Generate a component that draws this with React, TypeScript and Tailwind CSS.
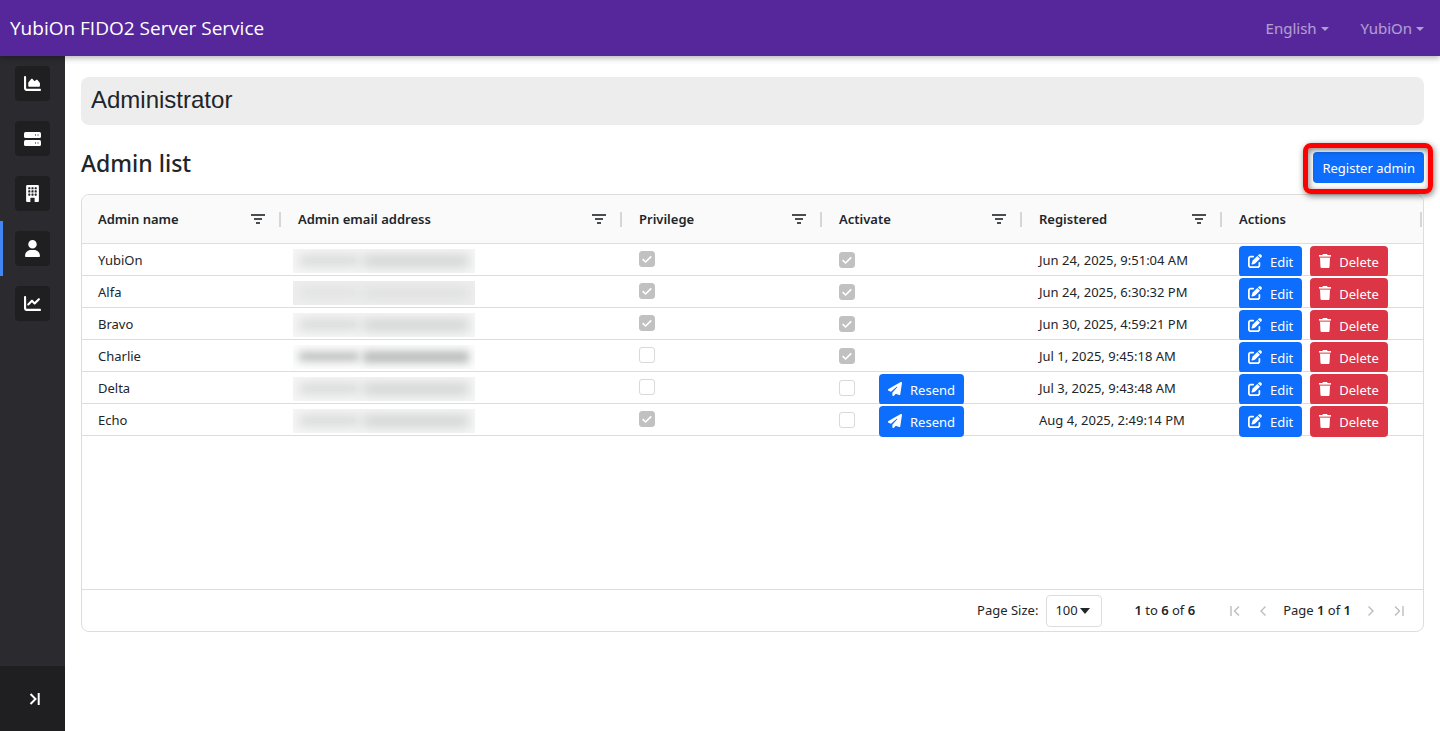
import type { ReactNode } from "react";
import { FaChartArea, FaChartLine, FaPaperPlane, FaPenToSquare, FaUser } from "react-icons/fa6";
import { BsBuildingFill } from "react-icons/bs";

type Admin = {
  name: string;
  privilege: boolean;
  active: boolean;
  registered: string;
  mask: "mid" | "light" | "dark";
};

const admins: Admin[] = [
  { name: "YubiOn", privilege: true, active: true, registered: "Jun 24, 2025, 9:51:04 AM", mask: "mid" },
  { name: "Alfa", privilege: true, active: true, registered: "Jun 24, 2025, 6:30:32 PM", mask: "light" },
  { name: "Bravo", privilege: true, active: true, registered: "Jun 30, 2025, 4:59:21 PM", mask: "mid" },
  { name: "Charlie", privilege: false, active: true, registered: "Jul 1, 2025, 9:45:18 AM", mask: "dark" },
  { name: "Delta", privilege: false, active: false, registered: "Jul 3, 2025, 9:43:48 AM", mask: "mid" },
  { name: "Echo", privilege: true, active: false, registered: "Aug 4, 2025, 2:49:14 PM", mask: "mid" },
];

function ServerIcon() {
  return (
    <svg viewBox="0 0 17 14" className="h-[14px] w-[17px]" aria-hidden="true">
      <g fill="currentColor">
        <rect width="17" height="6" rx="1.5" />
        <rect y="8" width="17" height="6" rx="1.5" />
      </g>
      <path d="M11 2h1v2h-1zM13.5 2h1v2h-1zM11 10h1v2h-1zM13.5 10h1v2h-1z" fill="#8b8b8d" />
    </svg>
  );
}

const navItems: { label: string; icon: ReactNode; current?: boolean }[] = [
  { label: "Dashboard", icon: <FaChartArea className="size-[17px]" /> },
  { label: "Servers", icon: <ServerIcon /> },
  { label: "Company", icon: <BsBuildingFill className="size-[17px]" /> },
  { label: "Administrator", icon: <FaUser className="size-[17px]" />, current: true },
  { label: "Statistics", icon: <FaChartLine className="size-[17px]" /> },
];

const columns = [
  { title: "Admin name", filter: true },
  { title: "Admin email address", filter: true },
  { title: "Privilege", filter: true },
  { title: "Activate", filter: true },
  { title: "Registered", filter: true },
  { title: "Actions", filter: false },
];

const masks = {
  mid: { box: "bg-[#f6f6f6]", bar: "bg-[#cfd1d1] blur-[6px]" },
  light: { box: "bg-[#eeeeee]", bar: "bg-[#dedfdf] blur-[6px]" },
  dark: { box: "bg-[#fcfcfc]", bar: "bg-[#b9bbbb] blur-[4px]" },
};

function MaskedEmail({ tone }: { tone: Admin["mask"] }) {
  const mask = masks[tone];
  return (
    <div className={`-ml-[5px] flex h-6 w-[182px] items-center gap-1 overflow-hidden px-[6px] ${mask.box}`}>
      <span className={`h-[9px] w-15 ${mask.bar}`} />
      <span className={`h-3 flex-1 ${mask.bar}`} />
    </div>
  );
}

function CheckCell({ checked, label }: { checked: boolean; label: string }) {
  return (
    <span className="grid size-4 shrink-0">
      <input
        type="checkbox"
        aria-label={label}
        defaultChecked={checked}
        disabled
        className="size-4 appearance-none rounded-[3px] border border-[#d9d9d9] bg-white [grid-area:1/1] checked:border-[#c1c1c1] checked:bg-[#c1c1c1]"
      />
      {checked && (
        <svg viewBox="0 0 16 16" className="size-4 [grid-area:1/1]" fill="none" stroke="white" strokeWidth="1.6" aria-hidden="true">
          <path d="M3.6 8.2 6.6 11 12.2 5.4" />
        </svg>
      )}
    </span>
  );
}

function TrashIcon() {
  return (
    <svg viewBox="0 0 12 14" className="h-[14px] w-3" fill="currentColor" aria-hidden="true">
      <path d="M4 0h4l.6 1H12v1.4H0V1h3.4z" />
      <path d="M.4 2.4h11.2v1H.4z" opacity=".45" />
      <path d="M1 3.8h10l-.5 9.3a1 1 0 0 1-1 .9h-7a1 1 0 0 1-1-.9z" />
    </svg>
  );
}

function RowButton({ icon, label, danger = false }: { icon: ReactNode; label: string; danger?: boolean }) {
  return (
    <button
      type="button"
      className={`flex h-[31px] shrink-0 items-center gap-2 rounded px-[9px] text-[13px] text-white ${danger ? "bg-[#dc3545]" : "bg-[#0d6efd]"}`}
    >
      <span className="pb-[2px]">{icon}</span>
      <span className="pt-[2px]">{label}</span>
    </button>
  );
}

function Chevron({ back = false, bar = false }: { back?: boolean; bar?: boolean }) {
  return (
    <svg viewBox="0 0 16 16" className={`size-4 ${back ? "rotate-180" : ""}`} fill="none" stroke="currentColor" strokeWidth="1.4" aria-hidden="true">
      {bar ? <path d="M4 3.5 8.5 8 4 12.5M12 3v10" /> : <path d="M5.5 3.5 10 8l-4.5 4.5" />}
    </svg>
  );
}

function NavMenu({ label }: { label: string }) {
  return (
    <button type="button" className="flex items-center gap-1 text-[15px] text-white/55">
      {label}
      <svg viewBox="0 0 8 4" className="h-1 w-2" fill="currentColor" aria-hidden="true">
        <path d="M0 0h8L4 4z" />
      </svg>
    </button>
  );
}

export default function App() {
  return (
    <div className="flex min-h-screen flex-col bg-white font-['Noto_Sans','Open_Sans',sans-serif] text-[#212529]">
      <header className="z-10 flex h-14 items-center justify-between bg-[#56279b] pt-px pr-4 pl-[10px] shadow-[0_2px_6px_rgba(0,0,0,0.3)]">
        <a href="#home" className="font-['Open_Sans','Noto_Sans',sans-serif] text-[19px] text-white">YubiOn FIDO2 Server Service</a>
        <nav aria-label="Account" className="flex gap-8">
          <NavMenu label="English" />
          <NavMenu label="YubiOn" />
        </nav>
      </header>

      <div className="flex flex-1">
        <aside className="flex w-[65px] shrink-0 flex-col justify-between bg-[#2b2a2f]">
          <nav aria-label="Main">
            {navItems.map((item) => (
              <a
                key={item.label}
                href={`#${item.label.toLowerCase()}`}
                aria-label={item.label}
                aria-current={item.current ? "page" : undefined}
                className={`flex h-[55px] items-center justify-center border-l-[3px] pr-[3px] text-white ${item.current ? "border-[#4285f4]" : "border-transparent"}`}
              >
                <span className="flex size-[35px] items-center justify-center rounded bg-[#1f1f21]">{item.icon}</span>
              </a>
            ))}
          </nav>
          <button type="button" aria-label="Expand menu" className="flex h-[65px] items-center justify-center bg-[#1f1f21] pl-1 text-white">
            <svg viewBox="0 0 12 14" className="h-[14px] w-3" fill="none" stroke="currentColor" strokeWidth="2" aria-hidden="true">
              <path d="M1.5 2 6.5 7l-5 5M9.7 1v12" />
            </svg>
          </button>
        </aside>

        <main className="flex min-w-0 flex-1 flex-col px-4 pt-[21px] pb-[99px]">
          <h1 className="flex h-12 items-center rounded-lg bg-[#ededed] px-[10px] pb-[2px] font-['Liberation_Sans',Arial,sans-serif] text-2xl">
            Administrator
          </h1>

          <div className="mt-6 mb-[11px] flex items-start justify-between">
            <h2 className="text-[23px] font-medium leading-7">Admin list</h2>
            <div className="relative mt-[3px]">
              <button type="button" className="block h-[31px] rounded bg-[#0d6efd] px-[9px] pt-[2px] text-[13px] text-white">
                Register admin
              </button>
              <div className="pointer-events-none absolute -top-[9px] -right-[9px] -bottom-[11px] -left-[10px] rounded-lg border-5 border-[#fe0000] shadow-[1px_2px_6px_rgba(0,0,0,0.5),inset_1px_2px_6px_rgba(0,0,0,0.5)]" />
            </div>
          </div>

          <section aria-label="Admin list" className="flex flex-1 flex-col overflow-hidden rounded-lg border border-[#dcdddd]">
            <table className="w-full table-fixed border-separate border-spacing-0 text-left text-[13px]">
              <colgroup>
                <col className="w-[200px]" />
                <col />
                <col className="w-[200px]" />
                <col className="w-[200px]" />
                <col className="w-[200px]" />
                <col className="w-[200px]" />
              </colgroup>
              <thead>
                <tr className="bg-[#fafafa]">
                  {columns.map((col) => (
                    <th key={col.title} className="h-[49px] border-b border-[#dcdddd] p-0 pl-4 font-semibold">
                      <div className="flex items-center">
                        <span className="flex-1 pt-[2px]">{col.title}</span>
                        {col.filter && (
                          <button type="button" aria-label={`Filter ${col.title}`} className="mr-[13px] text-[#4b4e51]">
                            <svg viewBox="0 0 16 16" className="size-4" fill="none" stroke="currentColor" strokeWidth="2" aria-hidden="true">
                              <path d="M1 4h14M4 8h8M6 12h4" />
                            </svg>
                          </button>
                        )}
                        <span className="mr-px h-[15px] w-[2px] bg-[#d5d6d6]" />
                      </div>
                    </th>
                  ))}
                </tr>
              </thead>
              <tbody>
                {admins.map((admin, i) => {
                  const clip = i < admins.length - 1 ? "overflow-hidden" : "";
                  return (
                    <tr key={admin.name} className="[&>td]:h-8 [&>td]:border-b [&>td]:border-[#dcdddd] [&>td]:p-0 [&>td]:pl-4">
                      <td>
                        <div className="pt-[2px]">{admin.name}</div>
                      </td>
                      <td>
                        <div className="pt-[2px]">
                          <MaskedEmail tone={admin.mask} />
                        </div>
                      </td>
                      <td>
                        <div className="pb-[2px]">
                          <CheckCell checked={admin.privilege} label={`${admin.name} privilege`} />
                        </div>
                      </td>
                      <td>
                        <div className={`-mb-px flex h-8 items-center gap-6 ${clip}`}>
                          <CheckCell checked={admin.active} label={`${admin.name} active`} />
                          {!admin.active && (
                            <div className="h-7">
                              <RowButton icon={<FaPaperPlane className="size-[14px]" />} label="Resend" />
                            </div>
                          )}
                        </div>
                      </td>
                      <td>
                        <div className="pt-[2px]">{admin.registered}</div>
                      </td>
                      <td>
                        <div className={`-mb-px flex h-8 gap-2 pt-[2px] ${clip}`}>
                          <RowButton icon={<FaPenToSquare className="size-[14px]" />} label="Edit" />
                          <RowButton icon={<TrashIcon />} label="Delete" danger />
                        </div>
                      </td>
                    </tr>
                  );
                })}
              </tbody>
            </table>

            <footer className="mt-auto flex h-[42px] items-center justify-end border-t border-[#dcdddd] pr-4 text-[13px]">
              <label htmlFor="page-size" className="pt-px">Page Size:</label>
              <div className="relative ml-2">
                <select id="page-size" defaultValue="100" className="block h-8 w-14 appearance-none rounded border border-[#dcdddd] bg-white pt-px pl-2">
                  <option value="100">100</option>
                  <option value="50">50</option>
                  <option value="20">20</option>
                </select>
                <svg viewBox="0 0 10 6" className="pointer-events-none absolute top-[13px] right-3 h-[6px] w-[10px]" fill="currentColor" aria-hidden="true">
                  <path d="M0 0h10L5 6z" />
                </svg>
              </div>
              <p className="ml-8 pt-px">
                <b className="font-semibold">1</b> to <b className="font-semibold">6</b> of <b className="font-semibold">6</b>
              </p>
              <div className="ml-8 flex items-center gap-3 text-[#bcbdbe]">
                <button type="button" aria-label="First page" disabled><Chevron back bar /></button>
                <button type="button" aria-label="Previous page" disabled><Chevron back /></button>
                <p className="pt-px text-[#212529]">
                  Page <b className="font-semibold">1</b> of <b className="font-semibold">1</b>
                </p>
                <button type="button" aria-label="Next page" disabled><Chevron /></button>
                <button type="button" aria-label="Last page" disabled><Chevron bar /></button>
              </div>
            </footer>
          </section>
        </main>
      </div>
    </div>
  );
}
